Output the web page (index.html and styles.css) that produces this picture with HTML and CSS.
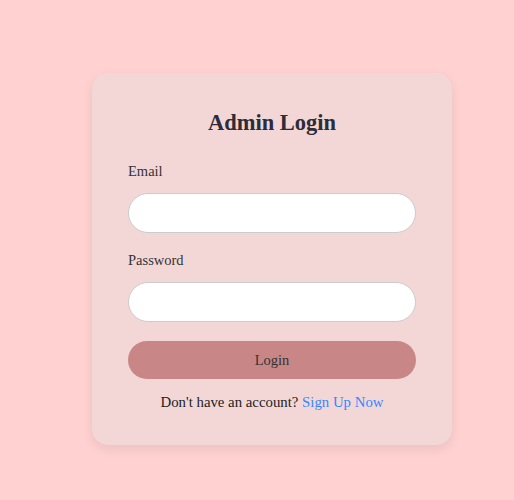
FILE: index.html
```html
<!DOCTYPE html>
<html>
<head>
<meta charset="utf-8">
<link rel="stylesheet" href="styles.css">
</head>
<body>
<div class="page">
  <form class="card">
    <h2 class="title">Admin Login</h2>
    <label class="label">Email</label>
    <input class="input" type="email">
    <label class="label">Password</label>
    <input class="input" type="password">
    <button class="btn" type="button">Login</button>
    <p class="foot">Don't have an account? <a class="link" href="#">Sign Up Now</a></p>
  </form>
</div>
</body>
</html>
```
FILE: styles.css
```css
html, body {
  margin: 0;
  padding: 0;
  background: #ffd1d1;
  font-family: "Liberation Serif", serif;
  color: #333;
}
.page {
  width: 514px;
  height: 500px;
  display: flex;
  justify-content: flex-start;
  padding: 73px 0 0 92px;
  box-sizing: border-box;
}
.card {
  width: 360px;
  height: 372px;
  box-sizing: border-box;
  background: #f3d7d7;
  border-radius: 16px;
  box-shadow: 0 4px 12px rgba(0,0,0,0.08);
  padding: 37px 36px 0;
  display: flex;
  flex-direction: column;
}
.card > * {
  flex-shrink: 0;
}
.title {
  margin: 0 0 26px;
  text-align: center;
  font-size: 22.5px;
  font-weight: bold;
  color: #2c2c3a;
  line-height: 26px;
}
.label {
  font-size: 14.5px;
  line-height: 18px;
  color: #333;
  margin-bottom: 13px;
}
.input {
  height: 40px;
  box-sizing: border-box;
  border: 1px solid #ccc;
  border-radius: 20px;
  background: #fff;
  margin: 0 0 18px;
  padding: 0 14px;
}
.btn {
  height: 38px;
  border: none;
  border-radius: 20px;
  background: #c88686;
  color: #333;
  font-family: "Liberation Serif", serif;
  font-size: 14.5px;
  margin-top: 1px;
}
.foot {
  margin: 15px 0 0;
  text-align: center;
  font-size: 14.8px;
  color: #222;
}
.link {
  color: #3388ff;
  text-decoration: none;
}
```
